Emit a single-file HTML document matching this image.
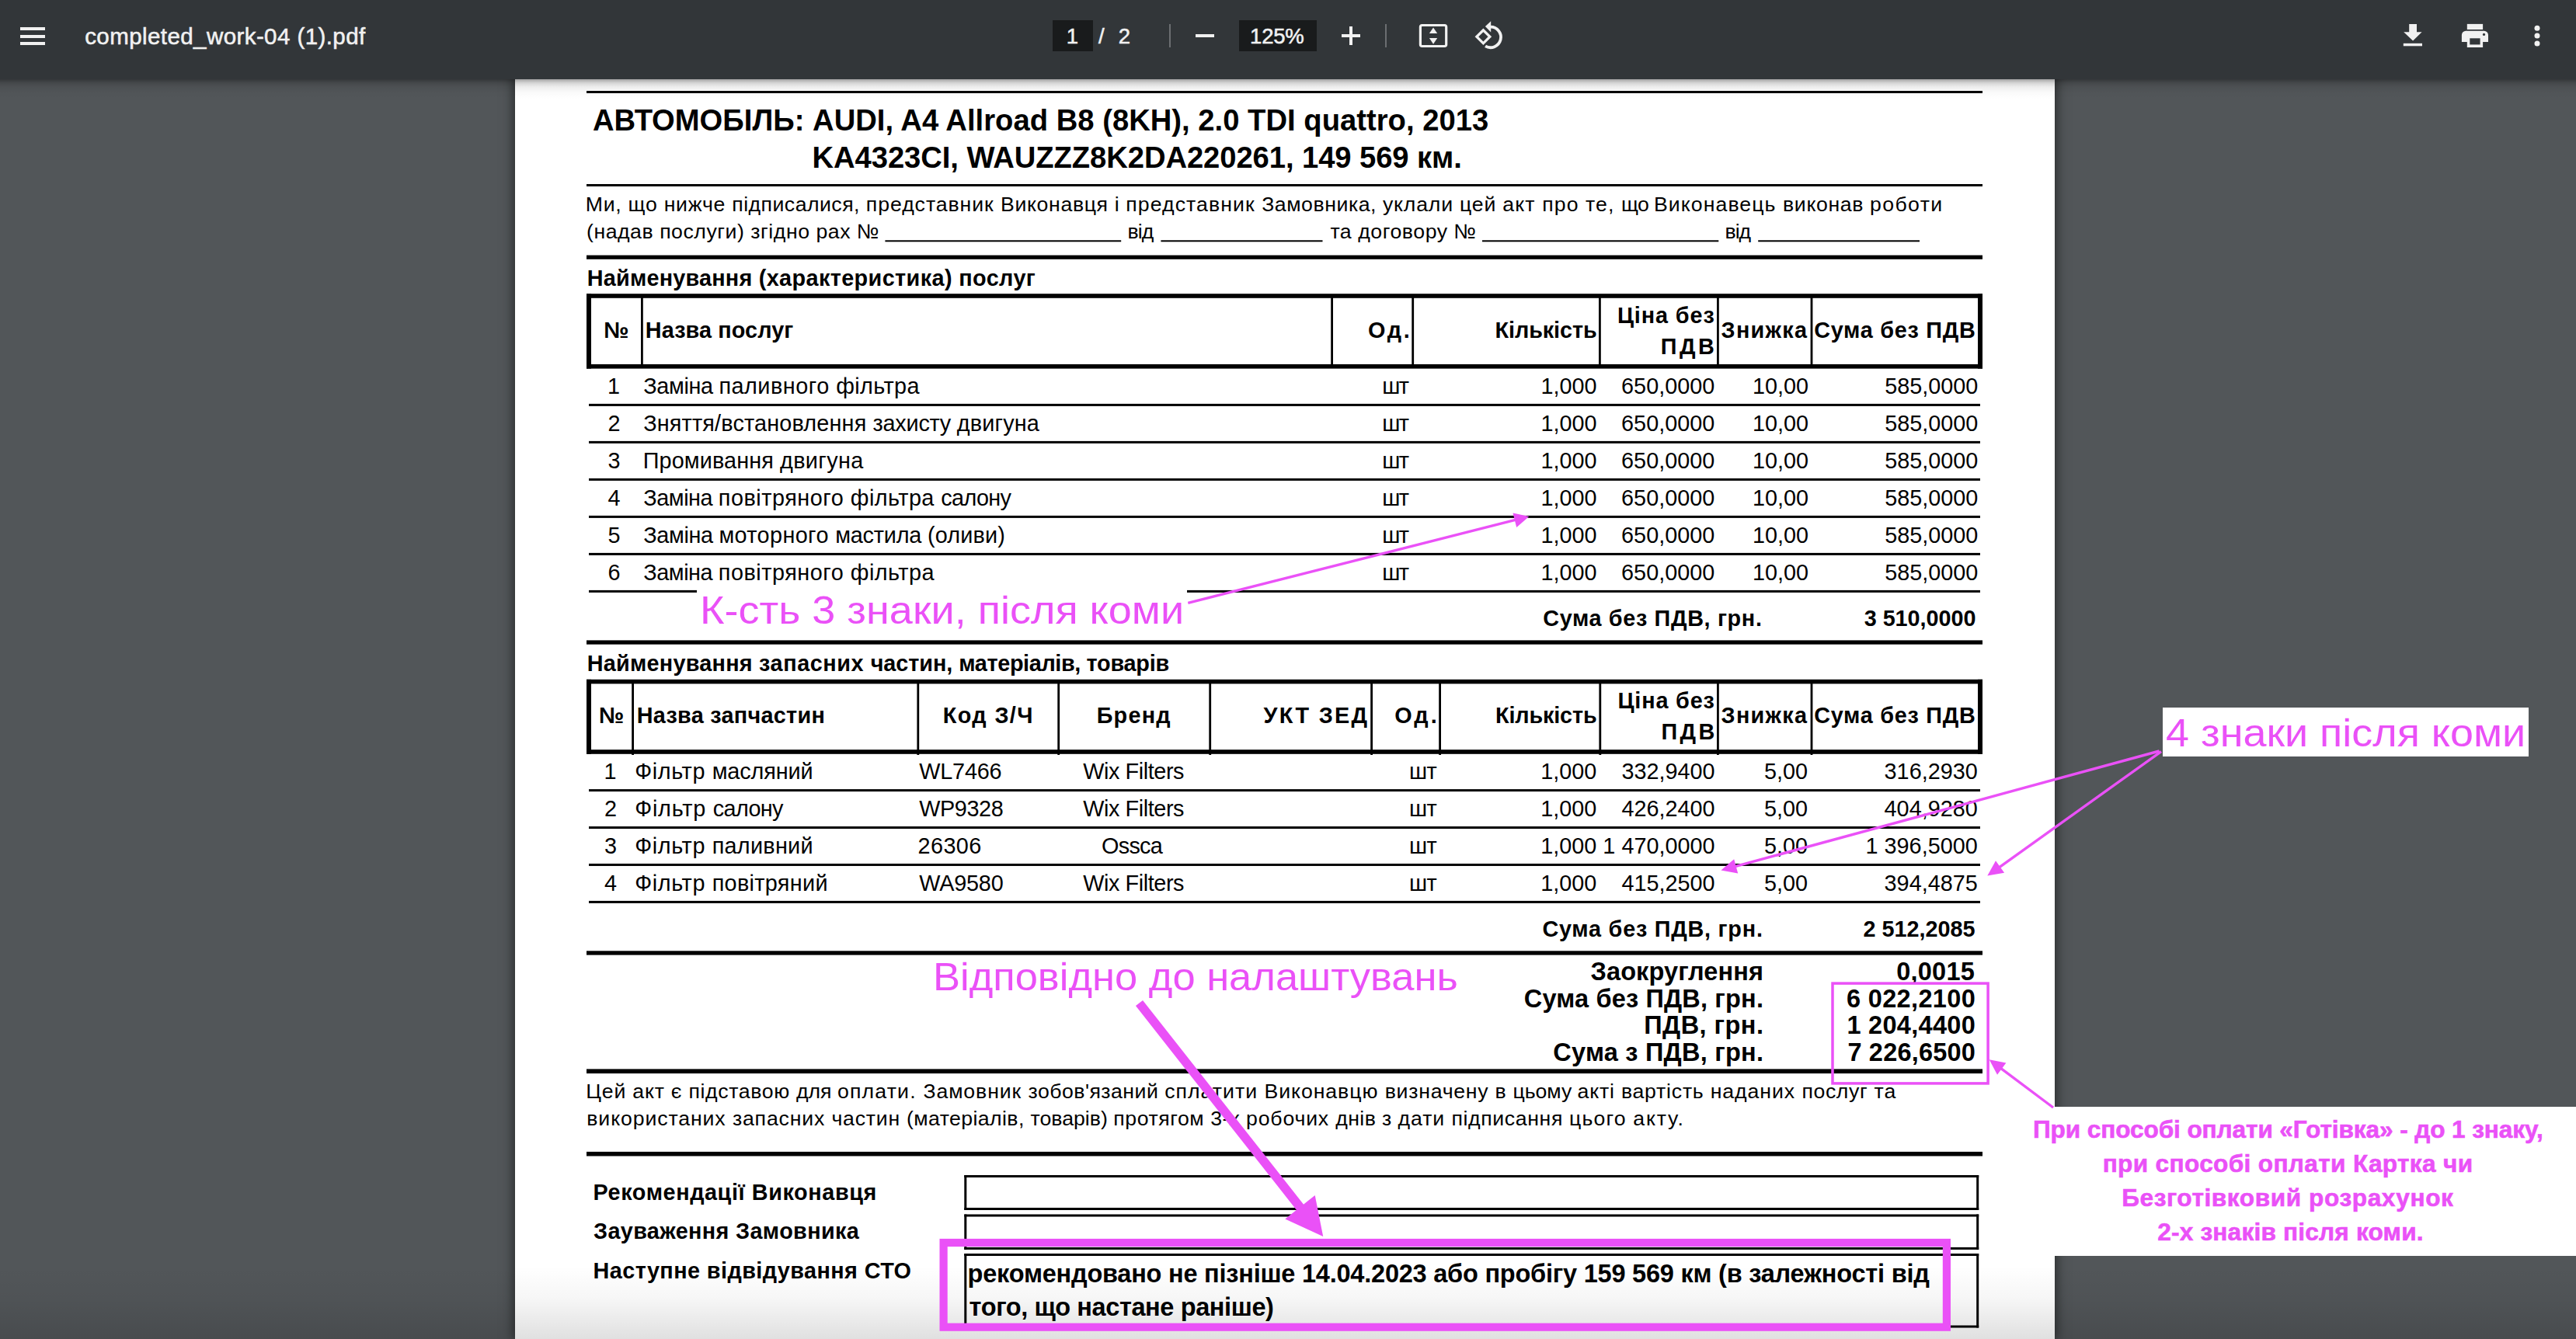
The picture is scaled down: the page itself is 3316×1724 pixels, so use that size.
<!DOCTYPE html>
<html lang="uk"><head><meta charset="utf-8"><title>completed_work-04 (1).pdf</title>
<style>
html,body{margin:0;padding:0}
html{width:3316px;height:1724px;overflow:hidden}
body{width:3316px;height:1724px;overflow:hidden;background:#525659;position:relative;font-family:"Liberation Sans", sans-serif;}
#bar .t{-webkit-text-stroke:0.55px #f1f1f1}
#ann .t[style*="bold"]{-webkit-text-stroke:0.6px #EA51F7}
.t{position:absolute;white-space:pre;line-height:1em;color:#000;font-family:"Liberation Sans", sans-serif;}
.r{position:absolute;box-sizing:content-box}
.ov{position:absolute;left:0;top:0;pointer-events:none}
#page{position:absolute;left:663px;top:96px;width:1982px;height:1628px;background:#fff;box-shadow:0 0 14px 2px rgba(0,0,0,.55)}
#bar{position:absolute;left:0;top:0;width:3316px;height:102px;background:#323639}
#barsh{position:absolute;left:0;top:102px;width:3316px;height:26px;background:linear-gradient(to bottom,rgba(0,0,0,.36) 0,rgba(0,0,0,.17) 18%,rgba(0,0,0,.07) 38%,rgba(0,0,0,.02) 65%,rgba(0,0,0,0) 100%)}
#botsh{position:absolute;left:0;top:1630px;width:3316px;height:94px;background:linear-gradient(to bottom,rgba(0,0,0,0) 0,rgba(0,0,0,.035) 45%,rgba(0,0,0,.12) 100%)}
#wb1{position:absolute;left:897px;top:757px;width:631px;height:62px;background:#fff}
#wb2{position:absolute;left:2783.6px;top:910.7px;width:471.2px;height:63.3px;background:#fff}
#wb3{position:absolute;left:2645px;top:1425.3px;width:671px;height:192.1px;background:#fff}
</style></head>
<body>
<div id="page"></div>
<div id="doc">
<svg class="ov" width="3316" height="1724" viewBox="0 0 3316 1724" fill="#000"><rect x="755.00" y="117.00" width="1797.00" height="3.00"/><rect x="755.00" y="237.00" width="1797.00" height="3.00"/><rect x="1139.40" y="309.30" width="303.80" height="2.00"/><rect x="1494.40" y="309.30" width="208.10" height="2.00"/><rect x="1908.00" y="309.30" width="304.30" height="2.00"/><rect x="2263.20" y="309.30" width="207.80" height="2.00"/><rect x="755.00" y="328.60" width="1797.00" height="5.20"/><rect x="755.00" y="378.20" width="1797.00" height="5.60"/><rect x="755.00" y="469.00" width="1797.00" height="5.60"/><rect x="755.00" y="378.20" width="6.00" height="96.40"/><rect x="2546.00" y="378.20" width="6.00" height="96.40"/><rect x="825.00" y="380.00" width="2.80" height="92.00"/><rect x="1713.20" y="380.00" width="2.80" height="92.00"/><rect x="1817.30" y="380.00" width="2.80" height="92.00"/><rect x="2058.00" y="380.00" width="2.80" height="92.00"/><rect x="2210.00" y="380.00" width="2.80" height="92.00"/><rect x="2330.60" y="380.00" width="2.80" height="92.00"/><rect x="758.00" y="519.90" width="1791.00" height="3.00"/><rect x="758.00" y="567.90" width="1791.00" height="3.00"/><rect x="758.00" y="615.90" width="1791.00" height="3.00"/><rect x="758.00" y="663.90" width="1791.00" height="3.00"/><rect x="758.00" y="711.90" width="1791.00" height="3.00"/><rect x="758.00" y="759.90" width="1791.00" height="3.00"/><rect x="755.00" y="824.40" width="1797.00" height="5.30"/><rect x="755.00" y="874.80" width="1797.00" height="5.60"/><rect x="755.00" y="965.20" width="1797.00" height="5.60"/><rect x="755.00" y="874.80" width="6.00" height="96.00"/><rect x="2546.00" y="874.80" width="6.00" height="96.00"/><rect x="813.20" y="877.00" width="2.80" height="95.00"/><rect x="1180.40" y="877.00" width="2.80" height="95.00"/><rect x="1361.30" y="877.00" width="2.80" height="95.00"/><rect x="1556.30" y="877.00" width="2.80" height="95.00"/><rect x="1764.20" y="877.00" width="2.80" height="95.00"/><rect x="1852.20" y="877.00" width="2.80" height="95.00"/><rect x="2058.40" y="877.00" width="2.80" height="95.00"/><rect x="2210.00" y="877.00" width="2.80" height="95.00"/><rect x="2330.60" y="877.00" width="2.80" height="95.00"/><rect x="758.00" y="1016.10" width="1791.00" height="3.00"/><rect x="758.00" y="1064.03" width="1791.00" height="3.00"/><rect x="758.00" y="1111.96" width="1791.00" height="3.00"/><rect x="758.00" y="1159.89" width="1791.00" height="3.00"/><rect x="755.00" y="1224.30" width="1797.00" height="5.30"/><rect x="755.00" y="1376.40" width="1797.00" height="5.70"/><rect x="755.00" y="1482.90" width="1797.00" height="5.60"/><rect x="1241.30" y="1513.00" width="1305.90" height="3.00"/><rect x="1241.30" y="1555.00" width="1305.90" height="3.00"/><rect x="1241.30" y="1513.00" width="3.00" height="45.00"/><rect x="2544.20" y="1513.00" width="3.00" height="45.00"/><rect x="1241.30" y="1563.50" width="1305.90" height="3.00"/><rect x="1241.30" y="1605.90" width="1305.90" height="3.00"/><rect x="1241.30" y="1563.50" width="3.00" height="45.40"/><rect x="2544.20" y="1563.50" width="3.00" height="45.40"/><rect x="1241.30" y="1614.00" width="1305.90" height="3.00"/><rect x="1241.30" y="1706.50" width="1305.90" height="3.00"/><rect x="1241.30" y="1614.00" width="3.00" height="95.50"/><rect x="2544.20" y="1614.00" width="3.00" height="95.50"/></svg>
<span class="t" style="left:762.90px;top:136px;font-size:38.2px;font-weight:bold;letter-spacing:0.019px;">АВТОМОБІЛЬ: AUDI, A4 Allroad B8 (8KH), 2.0 TDI quattro, 2013</span>
<span class="t" style="left:1045.60px;top:184px;font-size:38.2px;font-weight:bold;letter-spacing:-0.071px;">KA4323CI, WAUZZZ8K2DA220261, 149 569 км.</span>
<span class="t" style="left:753.80px;top:250px;font-size:26.67px;letter-spacing:0.727px;">Ми, що нижче </span>
<span class="t" style="left:942.30px;top:250px;font-size:26.67px;letter-spacing:0.468px;">підписалися, </span>
<span class="t" style="left:1114.80px;top:250px;font-size:26.67px;letter-spacing:0.944px;">представник </span>
<span class="t" style="left:1288.10px;top:250px;font-size:26.67px;letter-spacing:0.633px;">Виконавця і </span>
<span class="t" style="left:1449.30px;top:250px;font-size:26.67px;letter-spacing:1.078px;">представник </span>
<span class="t" style="left:1624.20px;top:250px;font-size:26.67px;letter-spacing:0.551px;">Замовника, </span>
<span class="t" style="left:1780.00px;top:250px;font-size:26.67px;letter-spacing:0.790px;">уклали цей </span>
<span class="t" style="left:1934.30px;top:250px;font-size:26.67px;letter-spacing:1.112px;">акт про те, </span>
<span class="t" style="left:2087.10px;top:250px;font-size:26.67px;letter-spacing:-0.692px;">що </span>
<span class="t" style="left:2128.90px;top:250px;font-size:26.67px;letter-spacing:1.086px;">Виконавець </span>
<span class="t" style="left:2295.10px;top:250px;font-size:26.67px;letter-spacing:0.618px;">виконав </span>
<span class="t" style="left:2407.00px;top:250px;font-size:26.67px;letter-spacing:1.385px;">роботи</span>
<span class="t" style="left:755.00px;top:285px;font-size:26.67px;letter-spacing:0.537px;">(надав послуги) згідно рах №</span>
<span class="t" style="left:1451.50px;top:285px;font-size:26.67px;letter-spacing:-0.943px;">від</span>
<span class="t" style="left:1712.40px;top:285px;font-size:26.67px;letter-spacing:0.564px;">та договору №</span>
<span class="t" style="left:2220.60px;top:285px;font-size:26.67px;letter-spacing:-1.093px;">від</span>
<span class="t" style="left:755.80px;top:344px;font-size:28.8px;font-weight:bold;letter-spacing:0.210px;">Найменування </span>
<span class="t" style="left:976.70px;top:344px;font-size:28.8px;font-weight:bold;letter-spacing:0.395px;">(характеристика) </span>
<span class="t" style="left:1234.30px;top:344px;font-size:28.8px;font-weight:bold;letter-spacing:0.389px;">послуг</span>
<span class="t" style="left:777.30px;top:411px;font-size:28.8px;font-weight:bold;">№</span>
<span class="t" style="left:830.80px;top:411px;font-size:28.8px;font-weight:bold;letter-spacing:0.103px;">Назва послуг</span>
<span class="t" style="left:1761.10px;top:411px;font-size:28.8px;font-weight:bold;letter-spacing:2.866px;">Од.</span>
<span class="t" style="left:1924.60px;top:411px;font-size:28.8px;font-weight:bold;letter-spacing:-0.101px;">Кількість</span>
<span class="t" style="left:2081.90px;top:392px;font-size:28.8px;font-weight:bold;letter-spacing:0.907px;">Ціна без</span>
<span class="t" style="left:2137.80px;top:432px;font-size:28.8px;font-weight:bold;letter-spacing:3.440px;">ПДВ</span>
<span class="t" style="left:2215.60px;top:411px;font-size:28.8px;font-weight:bold;letter-spacing:1.286px;">Знижка</span>
<span class="t" style="left:2335.20px;top:411px;font-size:28.8px;font-weight:bold;letter-spacing:0.736px;">Сума без ПДВ</span>
<span class="t" style="left:782.00px;top:483px;font-size:28.8px;">1</span>
<span class="t" style="left:828.20px;top:483px;font-size:28.8px;letter-spacing:-0.333px;">Заміна </span>
<span class="t" style="left:925.40px;top:483px;font-size:28.8px;letter-spacing:0.519px;">паливного </span>
<span class="t" style="left:1076.20px;top:483px;font-size:28.8px;letter-spacing:0.407px;">фільтра</span>
<span class="t" style="left:1779.30px;top:483px;font-size:28.8px;letter-spacing:-1.608px;">шт</span>
<span class="t" style="left:1983.54px;top:483px;font-size:28.8px;">1,000</span>
<span class="t" style="left:2087.11px;top:483px;font-size:28.8px;">650,0000</span>
<span class="t" style="left:2256.04px;top:483px;font-size:28.8px;">10,00</span>
<span class="t" style="left:2426.21px;top:483px;font-size:28.8px;">585,0000</span>
<span class="t" style="left:782.50px;top:531px;font-size:28.8px;">2</span>
<span class="t" style="left:828.20px;top:531px;font-size:28.8px;letter-spacing:0.175px;">Зняття/встановлення </span>
<span class="t" style="left:1123.60px;top:531px;font-size:28.8px;letter-spacing:-0.227px;">захисту </span>
<span class="t" style="left:1231.80px;top:531px;font-size:28.8px;letter-spacing:0.167px;">двигуна</span>
<span class="t" style="left:1779.30px;top:531px;font-size:28.8px;letter-spacing:-1.608px;">шт</span>
<span class="t" style="left:1983.54px;top:531px;font-size:28.8px;">1,000</span>
<span class="t" style="left:2087.11px;top:531px;font-size:28.8px;">650,0000</span>
<span class="t" style="left:2256.04px;top:531px;font-size:28.8px;">10,00</span>
<span class="t" style="left:2426.21px;top:531px;font-size:28.8px;">585,0000</span>
<span class="t" style="left:782.50px;top:579px;font-size:28.8px;">3</span>
<span class="t" style="left:827.80px;top:579px;font-size:28.8px;letter-spacing:0.108px;">Промивання </span>
<span class="t" style="left:1004.00px;top:579px;font-size:28.8px;letter-spacing:0.367px;">двигуна</span>
<span class="t" style="left:1779.30px;top:579px;font-size:28.8px;letter-spacing:-1.608px;">шт</span>
<span class="t" style="left:1983.54px;top:579px;font-size:28.8px;">1,000</span>
<span class="t" style="left:2087.11px;top:579px;font-size:28.8px;">650,0000</span>
<span class="t" style="left:2256.04px;top:579px;font-size:28.8px;">10,00</span>
<span class="t" style="left:2426.21px;top:579px;font-size:28.8px;">585,0000</span>
<span class="t" style="left:782.50px;top:627px;font-size:28.8px;">4</span>
<span class="t" style="left:828.20px;top:627px;font-size:28.8px;letter-spacing:-0.419px;">Заміна </span>
<span class="t" style="left:924.80px;top:627px;font-size:28.8px;letter-spacing:0.534px;">повітряного </span>
<span class="t" style="left:1094.80px;top:627px;font-size:28.8px;letter-spacing:0.453px;">фільтра </span>
<span class="t" style="left:1211.30px;top:627px;font-size:28.8px;letter-spacing:-0.632px;">салону</span>
<span class="t" style="left:1779.30px;top:627px;font-size:28.8px;letter-spacing:-1.608px;">шт</span>
<span class="t" style="left:1983.54px;top:627px;font-size:28.8px;">1,000</span>
<span class="t" style="left:2087.11px;top:627px;font-size:28.8px;">650,0000</span>
<span class="t" style="left:2256.04px;top:627px;font-size:28.8px;">10,00</span>
<span class="t" style="left:2426.21px;top:627px;font-size:28.8px;">585,0000</span>
<span class="t" style="left:782.50px;top:675px;font-size:28.8px;">5</span>
<span class="t" style="left:828.20px;top:675px;font-size:28.8px;letter-spacing:-0.333px;">Заміна </span>
<span class="t" style="left:925.40px;top:675px;font-size:28.8px;letter-spacing:0.391px;">моторного </span>
<span class="t" style="left:1075.20px;top:675px;font-size:28.8px;letter-spacing:-0.189px;">мастила </span>
<span class="t" style="left:1194.00px;top:675px;font-size:28.8px;letter-spacing:0.158px;">(оливи)</span>
<span class="t" style="left:1779.30px;top:675px;font-size:28.8px;letter-spacing:-1.608px;">шт</span>
<span class="t" style="left:1983.54px;top:675px;font-size:28.8px;">1,000</span>
<span class="t" style="left:2087.11px;top:675px;font-size:28.8px;">650,0000</span>
<span class="t" style="left:2256.04px;top:675px;font-size:28.8px;">10,00</span>
<span class="t" style="left:2426.21px;top:675px;font-size:28.8px;">585,0000</span>
<span class="t" style="left:782.50px;top:723px;font-size:28.8px;">6</span>
<span class="t" style="left:828.20px;top:723px;font-size:28.8px;letter-spacing:-0.419px;">Заміна </span>
<span class="t" style="left:924.80px;top:723px;font-size:28.8px;letter-spacing:0.534px;">повітряного </span>
<span class="t" style="left:1094.80px;top:723px;font-size:28.8px;letter-spacing:0.457px;">фільтра</span>
<span class="t" style="left:1779.30px;top:723px;font-size:28.8px;letter-spacing:-1.608px;">шт</span>
<span class="t" style="left:1983.54px;top:723px;font-size:28.8px;">1,000</span>
<span class="t" style="left:2087.11px;top:723px;font-size:28.8px;">650,0000</span>
<span class="t" style="left:2256.04px;top:723px;font-size:28.8px;">10,00</span>
<span class="t" style="left:2426.21px;top:723px;font-size:28.8px;">585,0000</span>
<span class="t" style="left:1986.20px;top:782px;font-size:28.8px;font-weight:bold;letter-spacing:0.660px;">Сума без ПДВ, грн.</span>
<span class="t" style="left:2399.70px;top:782px;font-size:28.8px;font-weight:bold;letter-spacing:-0.036px;">3 510,0000</span>
<span class="t" style="left:755.80px;top:840px;font-size:28.8px;font-weight:bold;letter-spacing:0.241px;">Найменування </span>
<span class="t" style="left:977.10px;top:840px;font-size:28.8px;font-weight:bold;letter-spacing:0.567px;">запасних </span>
<span class="t" style="left:1120.70px;top:840px;font-size:28.8px;font-weight:bold;letter-spacing:-0.044px;">частин, </span>
<span class="t" style="left:1234.30px;top:840px;font-size:28.8px;font-weight:bold;letter-spacing:-0.364px;">матеріалів, </span>
<span class="t" style="left:1398.60px;top:840px;font-size:28.8px;font-weight:bold;letter-spacing:-0.242px;">товарів</span>
<span class="t" style="left:771.00px;top:907px;font-size:28.8px;font-weight:bold;">№</span>
<span class="t" style="left:819.70px;top:907px;font-size:28.8px;font-weight:bold;letter-spacing:0.292px;">Назва запчастин</span>
<span class="t" style="left:1213.70px;top:907px;font-size:28.8px;font-weight:bold;letter-spacing:1.415px;">Код З/Ч</span>
<span class="t" style="left:1411.70px;top:907px;font-size:28.8px;font-weight:bold;letter-spacing:1.224px;">Бренд</span>
<span class="t" style="left:1626.50px;top:907px;font-size:28.8px;font-weight:bold;letter-spacing:2.342px;">УКТ ЗЕД</span>
<span class="t" style="left:1795.30px;top:907px;font-size:28.8px;font-weight:bold;letter-spacing:3.216px;">Од.</span>
<span class="t" style="left:1925.00px;top:907px;font-size:28.8px;font-weight:bold;letter-spacing:-0.151px;">Кількість</span>
<span class="t" style="left:2082.50px;top:888px;font-size:28.8px;font-weight:bold;letter-spacing:0.822px;">Ціна без</span>
<span class="t" style="left:2138.40px;top:928px;font-size:28.8px;font-weight:bold;letter-spacing:3.440px;">ПДВ</span>
<span class="t" style="left:2215.60px;top:907px;font-size:28.8px;font-weight:bold;letter-spacing:1.286px;">Знижка</span>
<span class="t" style="left:2335.20px;top:907px;font-size:28.8px;font-weight:bold;letter-spacing:0.736px;">Сума без ПДВ</span>
<span class="t" style="left:777.50px;top:979px;font-size:28.8px;">1</span>
<span class="t" style="left:817.30px;top:979px;font-size:28.8px;letter-spacing:0.620px;">Фільтр </span>
<span class="t" style="left:916.70px;top:979px;font-size:28.8px;letter-spacing:-0.115px;">масляний</span>
<span class="t" style="left:1183.30px;top:979px;font-size:28.8px;letter-spacing:-0.190px;">WL7466</span>
<span class="t" style="left:1394.20px;top:979px;font-size:28.8px;letter-spacing:-0.408px;">Wix Filters</span>
<span class="t" style="left:1813.90px;top:979px;font-size:28.8px;letter-spacing:-0.608px;">шт</span>
<span class="t" style="left:1983.14px;top:979px;font-size:28.8px;">1,000</span>
<span class="t" style="left:2087.41px;top:979px;font-size:28.8px;">332,9400</span>
<span class="t" style="left:2270.95px;top:979px;font-size:28.8px;">5,00</span>
<span class="t" style="left:2425.61px;top:979px;font-size:28.8px;">316,2930</span>
<span class="t" style="left:778.00px;top:1027px;font-size:28.8px;">2</span>
<span class="t" style="left:817.30px;top:1027px;font-size:28.8px;letter-spacing:0.763px;">Фільтр </span>
<span class="t" style="left:917.70px;top:1027px;font-size:28.8px;letter-spacing:-0.612px;">салону</span>
<span class="t" style="left:1183.30px;top:1027px;font-size:28.8px;letter-spacing:-0.408px;">WP9328</span>
<span class="t" style="left:1394.20px;top:1027px;font-size:28.8px;letter-spacing:-0.408px;">Wix Filters</span>
<span class="t" style="left:1813.90px;top:1027px;font-size:28.8px;letter-spacing:-0.608px;">шт</span>
<span class="t" style="left:1983.14px;top:1027px;font-size:28.8px;">1,000</span>
<span class="t" style="left:2087.41px;top:1027px;font-size:28.8px;">426,2400</span>
<span class="t" style="left:2270.95px;top:1027px;font-size:28.8px;">5,00</span>
<span class="t" style="left:2425.61px;top:1027px;font-size:28.8px;">404,9280</span>
<span class="t" style="left:778.00px;top:1075px;font-size:28.8px;">3</span>
<span class="t" style="left:817.30px;top:1075px;font-size:28.8px;letter-spacing:0.620px;">Фільтр </span>
<span class="t" style="left:916.70px;top:1075px;font-size:28.8px;letter-spacing:0.287px;">паливний</span>
<span class="t" style="left:1181.50px;top:1075px;font-size:28.8px;letter-spacing:0.434px;">26306</span>
<span class="t" style="left:1418.10px;top:1075px;font-size:28.8px;letter-spacing:-0.752px;">Ossca</span>
<span class="t" style="left:1813.90px;top:1075px;font-size:28.8px;letter-spacing:-0.608px;">шт</span>
<span class="t" style="left:1983.14px;top:1075px;font-size:28.8px;">1,000</span>
<span class="t" style="left:2063.37px;top:1075px;font-size:28.8px;">1 470,0000</span>
<span class="t" style="left:2270.95px;top:1075px;font-size:28.8px;">5,00</span>
<span class="t" style="left:2401.57px;top:1075px;font-size:28.8px;">1 396,5000</span>
<span class="t" style="left:778.00px;top:1123px;font-size:28.8px;">4</span>
<span class="t" style="left:817.30px;top:1123px;font-size:28.8px;letter-spacing:0.620px;">Фільтр </span>
<span class="t" style="left:916.70px;top:1123px;font-size:28.8px;letter-spacing:0.325px;">повітряний</span>
<span class="t" style="left:1183.30px;top:1123px;font-size:28.8px;letter-spacing:-0.195px;">WA9580</span>
<span class="t" style="left:1394.20px;top:1123px;font-size:28.8px;letter-spacing:-0.408px;">Wix Filters</span>
<span class="t" style="left:1813.90px;top:1123px;font-size:28.8px;letter-spacing:-0.608px;">шт</span>
<span class="t" style="left:1983.14px;top:1123px;font-size:28.8px;">1,000</span>
<span class="t" style="left:2087.41px;top:1123px;font-size:28.8px;">415,2500</span>
<span class="t" style="left:2270.95px;top:1123px;font-size:28.8px;">5,00</span>
<span class="t" style="left:2425.61px;top:1123px;font-size:28.8px;">394,4875</span>
<span class="t" style="left:1985.40px;top:1182px;font-size:28.8px;font-weight:bold;letter-spacing:0.766px;">Сума без ПДВ, грн.</span>
<span class="t" style="left:2398.50px;top:1182px;font-size:28.8px;font-weight:bold;">2 512,2085</span>
<span class="t" style="left:2047.50px;top:1235px;font-size:32.5px;font-weight:bold;letter-spacing:0.097px;">Заокруглення</span>
<span class="t" style="left:2441.30px;top:1235px;font-size:32.5px;font-weight:bold;letter-spacing:0.214px;">0,0015</span>
<span class="t" style="left:1961.80px;top:1270px;font-size:32.5px;font-weight:bold;letter-spacing:0.168px;">Сума без ПДВ, грн.</span>
<span class="t" style="left:2376.90px;top:1270px;font-size:32.5px;font-weight:bold;letter-spacing:0.356px;">6 022,2100</span>
<span class="t" style="left:2116.30px;top:1304px;font-size:32.5px;font-weight:bold;letter-spacing:0.442px;">ПДВ, грн.</span>
<span class="t" style="left:2377.40px;top:1304px;font-size:32.5px;font-weight:bold;letter-spacing:0.300px;">1 204,4400</span>
<span class="t" style="left:1999.30px;top:1339px;font-size:32.5px;font-weight:bold;letter-spacing:0.235px;">Сума з ПДВ, грн.</span>
<span class="t" style="left:2378.40px;top:1339px;font-size:32.5px;font-weight:bold;letter-spacing:0.189px;">7 226,6500</span>
<span class="t" style="left:754.30px;top:1392px;font-size:26.67px;letter-spacing:0.785px;">Цей акт є </span>
<span class="t" style="left:886.40px;top:1392px;font-size:26.67px;letter-spacing:0.644px;">підставою </span>
<span class="t" style="left:1024.90px;top:1392px;font-size:26.67px;letter-spacing:0.012px;">для </span>
<span class="t" style="left:1077.90px;top:1392px;font-size:26.67px;letter-spacing:1.191px;">оплати. </span>
<span class="t" style="left:1188.40px;top:1392px;font-size:26.67px;letter-spacing:0.909px;">Замовник </span>
<span class="t" style="left:1323.50px;top:1392px;font-size:26.67px;letter-spacing:0.478px;">зобов&#x27;язаний </span>
<span class="t" style="left:1499.20px;top:1392px;font-size:26.67px;letter-spacing:1.014px;">сплатити </span>
<span class="t" style="left:1627.50px;top:1392px;font-size:26.67px;letter-spacing:0.936px;">Виконавцю </span>
<span class="t" style="left:1782.70px;top:1392px;font-size:26.67px;letter-spacing:0.744px;">визначену в </span>
<span class="t" style="left:1947.60px;top:1392px;font-size:26.67px;letter-spacing:-0.074px;">цьому </span>
<span class="t" style="left:2030.50px;top:1392px;font-size:26.67px;letter-spacing:0.814px;">акті </span>
<span class="t" style="left:2086.90px;top:1392px;font-size:26.67px;letter-spacing:0.768px;">вартість </span>
<span class="t" style="left:2201.70px;top:1392px;font-size:26.67px;letter-spacing:0.927px;">наданих </span>
<span class="t" style="left:2319.40px;top:1392px;font-size:26.67px;letter-spacing:0.627px;">послуг </span>
<span class="t" style="left:2412.40px;top:1392px;font-size:26.67px;letter-spacing:1.091px;">та</span>
<span class="t" style="left:755.30px;top:1427px;font-size:26.67px;letter-spacing:0.895px;">використаних </span>
<span class="t" style="left:942.90px;top:1427px;font-size:26.67px;letter-spacing:0.835px;">запасних </span>
<span class="t" style="left:1070.40px;top:1427px;font-size:26.67px;letter-spacing:0.774px;">частин </span>
<span class="t" style="left:1167.10px;top:1427px;font-size:26.67px;letter-spacing:0.400px;">(матеріалів, </span>
<span class="t" style="left:1326.50px;top:1427px;font-size:26.67px;letter-spacing:0.019px;">товарів) </span>
<span class="t" style="left:1433.30px;top:1427px;font-size:26.67px;letter-spacing:0.562px;">протягом </span>
<span class="t" style="left:1558.20px;top:1427px;font-size:26.67px;letter-spacing:0.366px;">3-х </span>
<span class="t" style="left:1604.10px;top:1427px;font-size:26.67px;letter-spacing:0.804px;">робочих </span>
<span class="t" style="left:1719.20px;top:1427px;font-size:26.67px;letter-spacing:0.428px;">днів з </span>
<span class="t" style="left:1799.60px;top:1427px;font-size:26.67px;letter-spacing:0.898px;">дати </span>
<span class="t" style="left:1868.40px;top:1427px;font-size:26.67px;letter-spacing:0.630px;">підписання </span>
<span class="t" style="left:2020.00px;top:1427px;font-size:26.67px;letter-spacing:1.157px;">цього </span>
<span class="t" style="left:2102.30px;top:1427px;font-size:26.67px;letter-spacing:1.837px;">акту.</span>
<span class="t" style="left:763.50px;top:1521px;font-size:28.8px;font-weight:bold;letter-spacing:0.595px;">Рекомендації Виконавця</span>
<span class="t" style="left:764.00px;top:1571px;font-size:28.8px;font-weight:bold;letter-spacing:0.366px;">Зауваження Замовника</span>
<span class="t" style="left:763.50px;top:1622px;font-size:28.8px;font-weight:bold;letter-spacing:0.434px;">Наступне відвідування СТО</span>
<span class="t" style="left:1245.60px;top:1624px;font-size:32.5px;font-weight:bold;letter-spacing:-0.222px;">рекомендовано не пізніше 14.04.2023 або пробігу 159 569 км (в залежності від</span>
<span class="t" style="left:1247.60px;top:1667px;font-size:32.5px;font-weight:bold;letter-spacing:-0.392px;">того, що настане раніше)</span>
</div>
<div id="botsh"></div>
<div id="wb1"></div><div id="wb2"></div><div id="wb3"></div>
<svg class="ov" width="3316" height="1724" viewBox="0 0 3316 1724"><line x1="1529.3" y1="776.3" x2="1953.6" y2="668.7" stroke="#EA51F7" stroke-width="3.4"/><polygon points="1968.3,665.0 1952.2,678.9 1947.5,660.5" fill="#EA51F7"/><line x1="2779.5" y1="967.0" x2="2230.8" y2="1116.4" stroke="#EA51F7" stroke-width="3.4"/><polygon points="2215.4,1120.6 2232.2,1106.2 2237.2,1124.5" fill="#EA51F7"/><line x1="2782.0" y1="967.6" x2="2571.3" y2="1118.3" stroke="#EA51F7" stroke-width="3.4"/><polygon points="2558.3,1127.6 2569.0,1108.2 2580.1,1123.7" fill="#EA51F7"/><line x1="2643.0" y1="1426.0" x2="2573.5" y2="1373.8" stroke="#EA51F7" stroke-width="3.4"/><polygon points="2560.7,1364.2 2582.4,1368.6 2571.0,1383.8" fill="#EA51F7"/><line x1="1466.5" y1="1291.5" x2="1679.4" y2="1561.8" stroke="#EA51F7" stroke-width="11.6"/><polygon points="1703.2,1592.0 1654.3,1569.5 1692.7,1539.1" fill="#EA51F7"/><rect x="2359.0" y="1266.1" width="200.1" height="128.8" fill="none" stroke="#EA51F7" stroke-width="3.5"/><rect x="1214.6" y="1600.0" width="1291.3" height="108.7" fill="none" stroke="#EA51F7" stroke-width="10.2"/></svg>
<div id="ann">
<span class="t" style="left:900.75px;top:761px;font-size:50.8px;color:#EA51F7;transform:scaleX(1.0628);transform-origin:0 0;">К-сть 3 знаки, після коми</span>
<span class="t" style="left:2788.34px;top:919px;font-size:50.8px;color:#EA51F7;transform:scaleX(1.0611);transform-origin:0 0;">4 знаки після коми</span>
<span class="t" style="left:1201.37px;top:1233px;font-size:50.8px;color:#EA51F7;transform:scaleX(1.0330);transform-origin:0 0;">Відповідно до налаштувань</span>
<span class="t" style="left:2617.00px;top:1439px;font-size:31.6px;font-weight:bold;color:#EA51F7;letter-spacing:-0.106px;">При способі оплати «Готівка» - до 1 знаку,</span>
<span class="t" style="left:2706.70px;top:1483px;font-size:31.6px;font-weight:bold;color:#EA51F7;letter-spacing:0.339px;">при способі оплати Картка чи</span>
<span class="t" style="left:2731.20px;top:1527px;font-size:31.6px;font-weight:bold;color:#EA51F7;letter-spacing:0.591px;">Безготівковий розрахунок</span>
<span class="t" style="left:2777.20px;top:1571px;font-size:31.6px;font-weight:bold;color:#EA51F7;letter-spacing:0.201px;">2-х знаків після коми.</span>
</div>
<div id="barsh"></div>
<div id="bar">
<div class="r" style="left:26px;top:35.0px;width:32px;height:4.2px;background:#f1f1f1"></div>
<div class="r" style="left:26px;top:44.5px;width:32px;height:4.2px;background:#f1f1f1"></div>
<div class="r" style="left:26px;top:54.0px;width:32px;height:4.2px;background:#f1f1f1"></div>
<div class="r" style="left:1354.9px;top:26.1px;width:51.9px;height:39.7px;background:#191b1c"></div>
<div class="r" style="left:1595.1px;top:26.1px;width:99.7px;height:39.7px;background:#191b1c"></div>
<div class="r" style="left:1504.6px;top:31.3px;width:2.4px;height:29.3px;background:#6b6e71"></div>
<div class="r" style="left:1782.6px;top:31.3px;width:2.4px;height:29.3px;background:#6b6e71"></div>
<div class="r" style="left:1539.1px;top:44px;width:24px;height:4.1px;background:#f1f1f1"></div>
<div class="r" style="left:1727.2px;top:43.9px;width:24px;height:4.1px;background:#f1f1f1"></div>
<div class="r" style="left:1737.1px;top:34px;width:4.1px;height:24px;background:#f1f1f1"></div>
<svg class="ov" width="3316" height="102" viewBox="0 0 3316 102">
<g fill="none" stroke="#f1f1f1" stroke-width="3.2" stroke-linejoin="round">
 <rect x="1828.4" y="32.5" width="33.3" height="27" rx="2.2"/>
</g>
<g fill="#f1f1f1">
 <polygon points="1845.05,35.4 1850.2,43.0 1839.9,43.0"/>
 <polygon points="1845.05,56.8 1850.2,49.0 1839.9,49.0"/>
</g>
<g fill="none" stroke="#f1f1f1">
 <rect x="-6" y="-6" width="12" height="12" stroke-width="3.3" transform="translate(1909.4,47.3) rotate(45)"/>
 <path d="M1918.7,34.6 A13.3,13.3 0 1 1 1912.05,59.4" stroke-width="3.8"/>
</g>
<polygon fill="#f1f1f1" points="1911.9,34.0 1919.2,27.2 1919.2,41.6"/>
<g fill="#f1f1f1">
 <polygon points="3101.2,30.9 3111.0,30.9 3111.0,41.2 3117.6,41.2 3106.1,52.6 3094.2,41.2 3101.2,41.2"/>
 <rect x="3093.8" y="55.8" width="24.2" height="3.5"/>
 <rect x="3175.8" y="30.9" width="20.3" height="7.1"/>
 <path d="M3174.3,39.7 h23.3 a5.4,5.4 0 0 1 5.4,5.4 v9.0 h-34.1 v-9.0 a5.4,5.4 0 0 1 5.4,-5.4 z"/>
 <rect x="3175.8" y="48.9" width="20.3" height="12.1"/>
 <rect x="3179.3" y="49.3" width="13.3" height="8.1" fill="#323639"/>
 <circle cx="3266" cy="36.2" r="3.5"/><circle cx="3266" cy="46.1" r="3.5"/><circle cx="3266" cy="56.1" r="3.5"/>
</g>
<circle cx="3197.5" cy="44.4" r="1.6" fill="#323639"/>
</svg>
<span class="t" style="left:109.20px;top:32px;font-size:29.5px;color:#f1f1f1;letter-spacing:0.421px;">completed_work-04 (1).pdf</span>
<span class="t" style="left:1372.70px;top:33px;font-size:27.5px;color:#f1f1f1;">1</span>
<span class="t" style="left:1414.00px;top:33px;font-size:27.5px;color:#f1f1f1;">/</span>
<span class="t" style="left:1439.80px;top:33px;font-size:27.5px;color:#f1f1f1;">2</span>
<span class="t" style="left:1609.10px;top:33px;font-size:27.5px;color:#f1f1f1;letter-spacing:-0.231px;">125%</span>
</div>
</body></html>
